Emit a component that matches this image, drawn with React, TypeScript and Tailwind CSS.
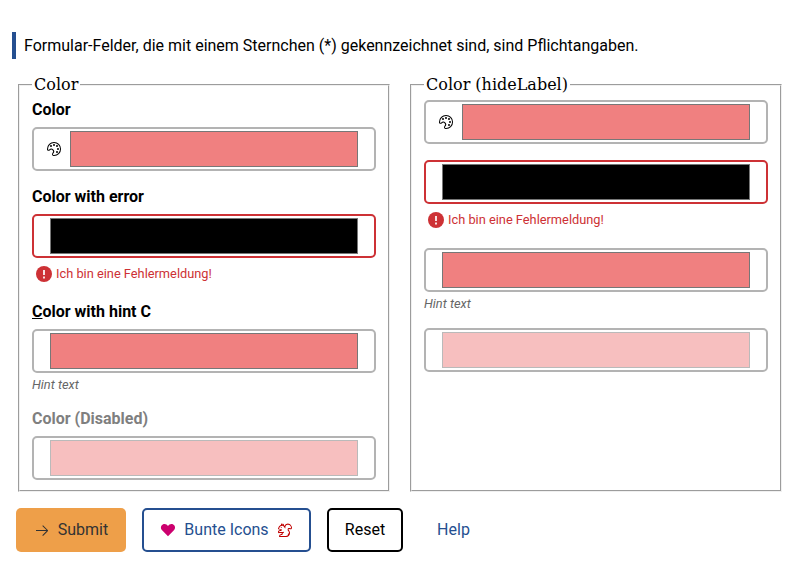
import type { ReactNode } from "react";
import { VscArrowRight, VscSquirrel, VscSymbolColor } from "react-icons/vsc";

type FieldProps = {
  label?: ReactNode;
  icon?: boolean;
  error?: string;
  hint?: string;
  disabled?: boolean;
  black?: boolean;
};

function Field({ label, icon, error, hint, disabled, black }: FieldProps) {
  return (
    <div>
      {label && (
        <div className={`mb-2 h-[19px] font-bold leading-[19px] ${disabled ? "text-[#7f7f7f]" : "text-black"}`}>
          {label}
        </div>
      )}
      <div
        className={`flex h-11 items-center rounded-[5px] border-2 px-4 ${error ? "border-[#cd3135]" : "border-[#b3b3b3]"}`}
      >
        {icon && <VscSymbolColor className="-ml-1 mr-2 size-4 shrink-0" />}
        <div
          className={`h-9 flex-1 border border-[#777777] ${black ? "bg-black" : "bg-[#f08080]"} ${disabled ? "opacity-50" : ""}`}
        />
      </div>
      {error && (
        <div className="flex h-7 items-start gap-1 pl-1 pt-2 text-[12.8px] leading-4 text-[#cd3135]">
          <svg viewBox="0 0 16 16" className="size-4">
            <circle cx="8" cy="8" r="8" fill="#cd3135" />
            <path d="M8 4v5M8 10.5v2" stroke="white" strokeWidth="1.7" />
          </svg>
          <span>{error}</span>
        </div>
      )}
      {hint && <div className="h-5 pt-1 text-[12.8px] italic leading-4 text-[#666666]">{hint}</div>}
    </div>
  );
}

function Group({ title, children }: { title: string; children: ReactNode }) {
  return (
    <fieldset className="mx-[2px] min-w-0 border-2 border-[#f0f0f0] px-3 pb-[10px] pt-[6px] [border-style:groove]">
      <legend className="h-[19px] px-[2px] font-['DejaVu_Serif',serif] leading-[19px]">{title}</legend>
      <div className="flex flex-col gap-4">{children}</div>
    </fieldset>
  );
}

export default function App() {
  return (
    <div className="h-[568px] bg-white pt-8 font-[Roboto,sans-serif] text-base text-black">
      <div className="ml-3 h-[27px] border-l-4 border-[#254f90] pl-2 leading-[27px]">
        Formular-Felder, die mit einem Sternchen (*) gekennzeichnet sind, sind Pflichtangaben.
      </div>
      <div className="mt-4 grid grid-cols-2 gap-4 px-4">
        <Group title="Color">
          <Field label="Color" icon />
          <Field label="Color with error" error="Ich bin eine Fehlermeldung!" black />
          <Field
            label={
              <>
                <u>C</u>olor with hint C
              </>
            }
            hint="Hint text"
          />
          <Field label="Color (Disabled)" disabled />
        </Group>
        <Group title="Color (hideLabel)">
          <Field icon />
          <Field error="Ich bin eine Fehlermeldung!" black />
          <Field hint="Hint text" />
          <Field disabled />
        </Group>
      </div>
      <div className="mt-4 flex gap-4 px-4">
        <button className="flex h-11 w-[110px] items-center justify-center gap-2 rounded-[5px] bg-[#ee9f49] text-[#333333]">
          <VscArrowRight className="size-4" />
          Submit
        </button>
        <button className="flex h-11 w-[169px] items-center justify-center gap-2 rounded-[5px] border-2 border-[#254f90] text-[#254f90]">
          <svg viewBox="0 0 16 16" className="size-4" fill="#cc006e">
            <path d="M8 14.2 2.1 8.2C.2 6.2.8 3.4 2.8 2.4 4.8 1.5 6.9 2.2 8 4c1.1-1.8 3.2-2.5 5.2-1.6 2 1 2.6 3.8.7 5.8z" />
          </svg>
          Bunte Icons
          <VscSquirrel className="size-4 text-[#c00000]" />
        </button>
        <button className="h-11 w-[76px] rounded-[5px] border-2 border-black">Reset</button>
        <button className="h-11 w-[69px] text-[#254f90]">Help</button>
      </div>
    </div>
  );
}
